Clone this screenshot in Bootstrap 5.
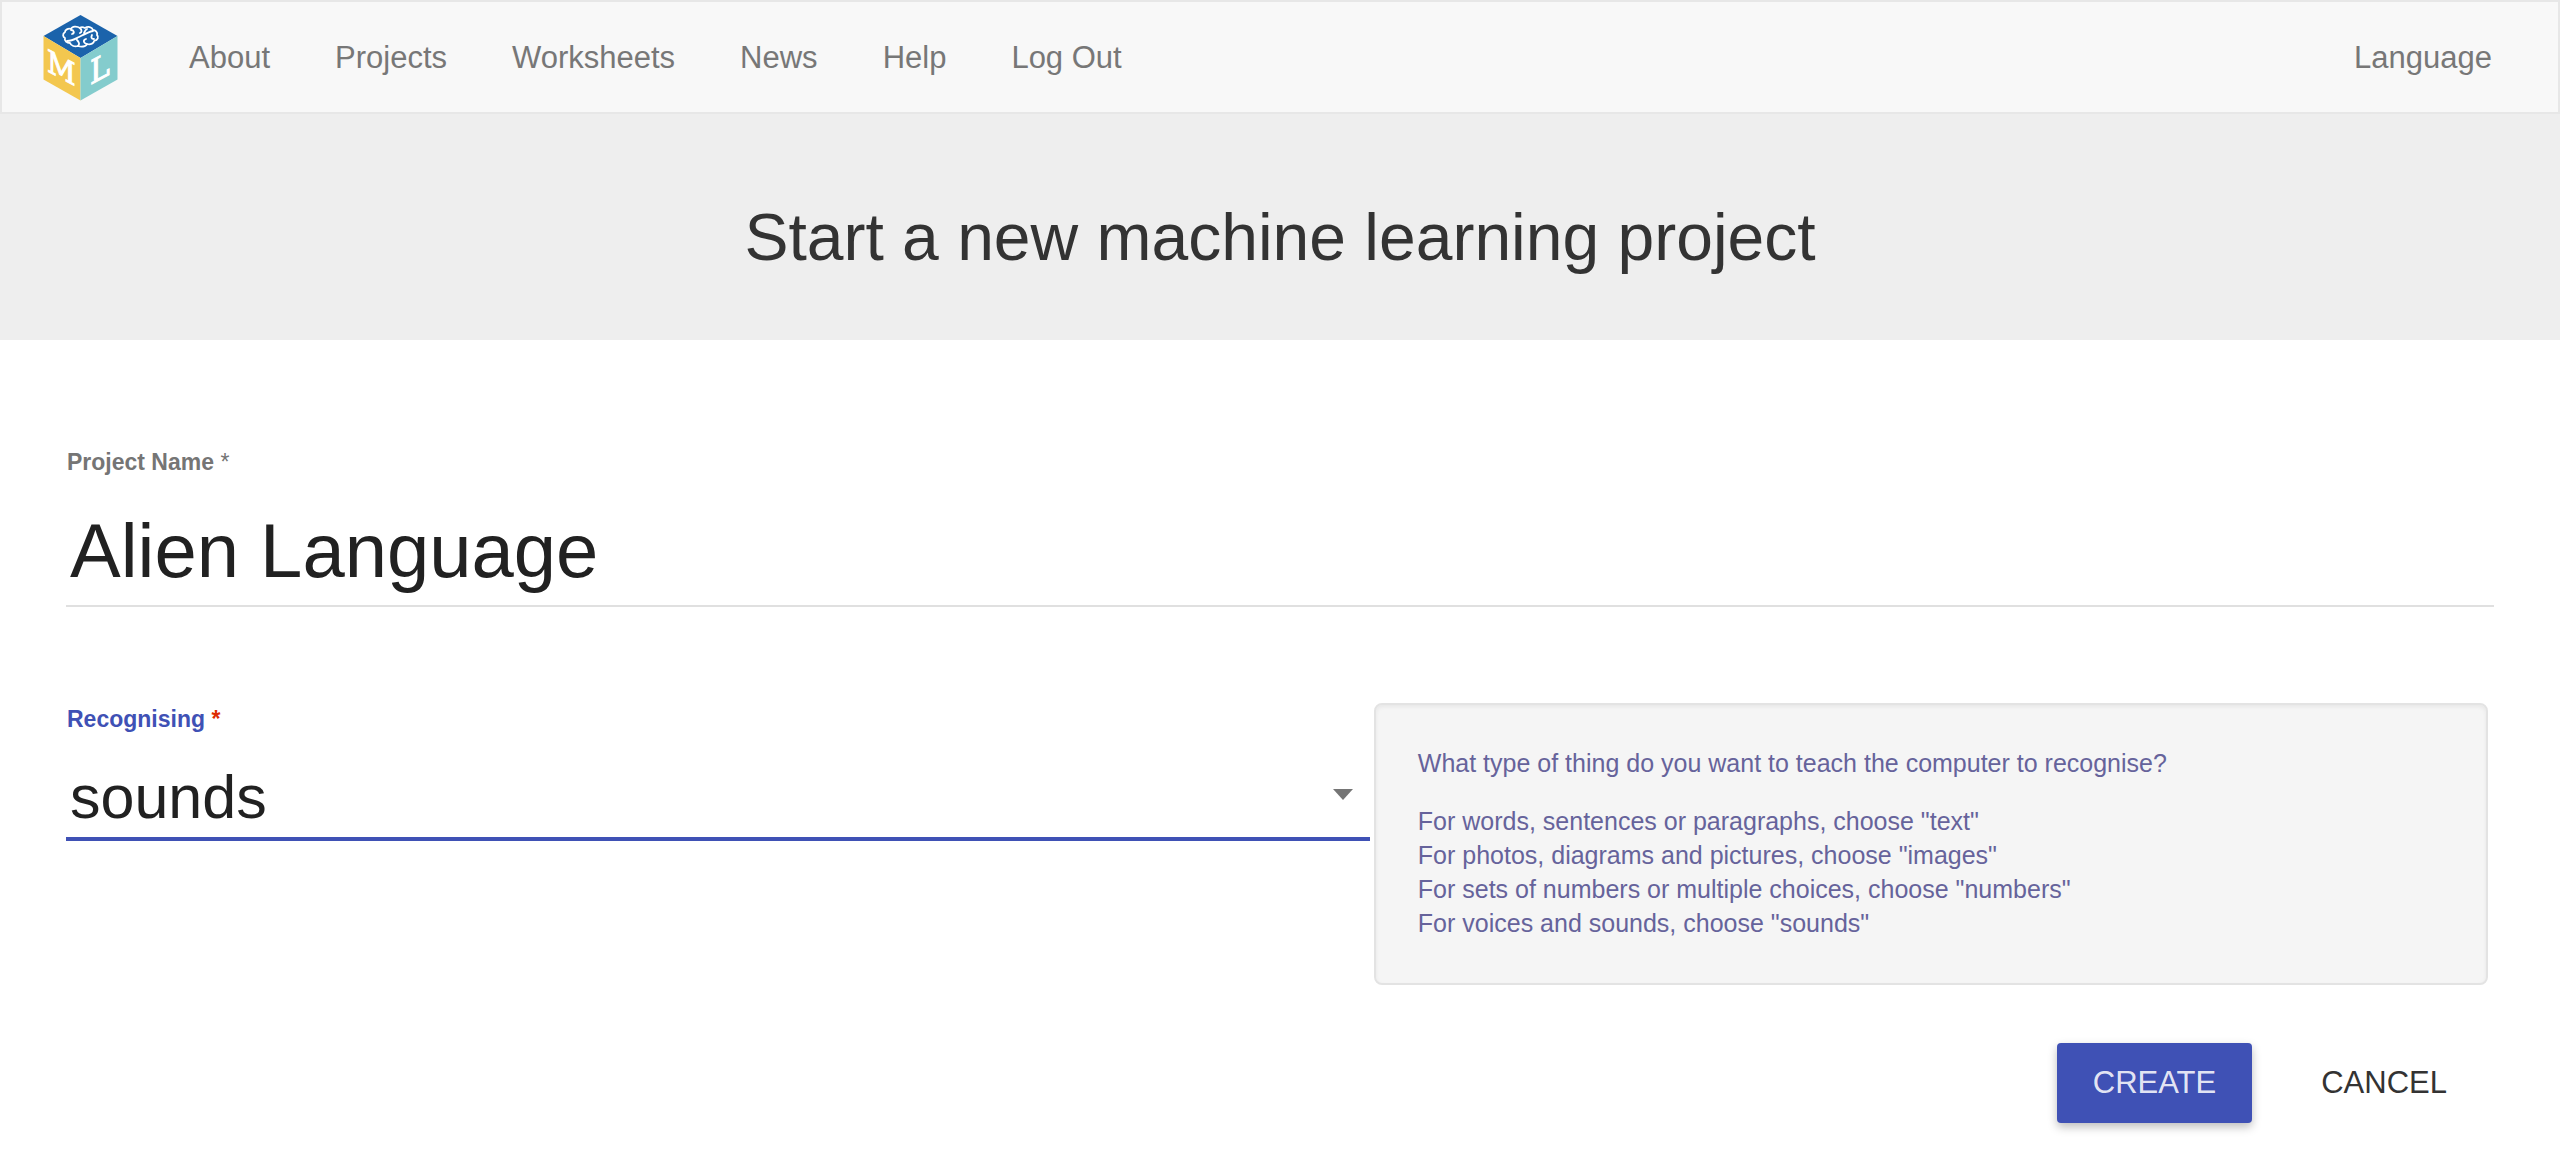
<!DOCTYPE html>
<html lang="en">
<head>
<meta charset="utf-8">
<meta name="viewport" content="width=device-width, initial-scale=1">
<title>Start a new machine learning project</title>
<link href="https://cdn.jsdelivr.net/npm/bootstrap@5.3.0/dist/css/bootstrap.min.css" rel="stylesheet">
<style>
  body { font-family: "Liberation Sans", Arial, sans-serif; color: #333; }
  .site-nav { background: #f8f8f8; border: 2px solid #e7e7e7; padding: 0 58px 0 41px; min-height: 114px; font-size: 31px; }
  .site-nav .nav-link { color: #777; padding-top: 2px; padding-bottom: 0; line-height: 40px; }
  .site-nav .navbar-brand { margin-right: 62px; padding: 0; }
  .site-nav .navbar-nav { gap: 49px; }
  .page-banner { background: #eee; padding: 90px 66px 70px; }
  .page-banner h1 { font-size: 66px; line-height: 66px; font-weight: 400; }
  .project-form { padding: 109px 66px 48px; }
  .field-label { font-size: 23px; line-height: 26px; font-weight: 700; color: #757575; padding-left: 1px; }
  .field-label span { font-weight: 400; }
  .field-box { display: block; width: 100%; border: 0; border-bottom: 2px solid #e0e0e0; background: transparent; color: #212121; outline: 0; padding: 0 4px; appearance: none; }
  .name-box { font-size: 76px; line-height: 88px; height: 132px; padding-top: 21px; }
  .type-row { margin-top: 96px; }
  .type-field { flex: 0 0 53.7%; padding-top: 3px; }
  .type-field .field-label { color: #3f51b5; }
  .type-field .field-label span { color: #dd2c00; font-weight: 700; }
  .type-box { font-size: 61px; line-height: 72px; height: 109px; border-bottom: 4px solid #3f51b5; padding-top: 24px; }
  .type-arrow { right: 17px; bottom: 41px; width: 20px; height: 11px; pointer-events: none; }
  .hint-card { margin: 0 6px 0 4px; padding: 41px 42px 43px; background: #f5f5f5; border: 2px solid #e3e3e3; border-radius: 8px; box-shadow: inset 0 2px 4px rgba(0,0,0,.06); color: #66639b; font-size: 25px; line-height: 34px; }
  .hint-card p { margin: 0 0 24px; }
  .form-actions { margin-top: 58px; gap: 33px; padding-right: 11px; }
  .form-actions .btn { font-size: 31px; line-height: 40px; padding: 20px 36px; border: 0; border-radius: 4px; }
  .form-actions .btn-create { background: #3f51b5; color: rgba(255,255,255,.87); box-shadow: 0 4px 10px rgba(0,0,0,.26); }
  .form-actions .btn-cancel { color: #333; }
</style>
</head>
<body>
<nav class="site-nav navbar navbar-expand">
  <a class="navbar-brand" href="#" aria-label="Home">
    <svg width="76" height="88" viewBox="0 0 76 88" class="d-block">
      <polygon points="37.500,2 74.500,23 37.500,45 0.500,23" fill="#1b63ab"/>
      <polygon points="0.500,23 37.500,45 37.500,87.500 0.500,66.500" fill="#f3c74f"/>
      <polygon points="74.500,23 37.500,45 37.500,87.500 74.500,66.500" fill="#84cccd"/>
      <g fill="none" stroke="#fff" stroke-width="1.800" stroke-linecap="round" stroke-linejoin="round">
        <path d="M37 15c-3-2-8-2-9 1c-3-1-6 1-6 3c-3 2-2 5 0 6c-1 3 2 5 5 5c1 3 5 4 8 3c3 1 8 1 9-2c4 1 7-1 7-3c4-1 5-4 3-6c1-3-2-5-4-5c-1-3-5-4-8-2c-2-1-4-1-5 0z"/>
        <path d="M24 28c5 0 8-2 12-4s9-5 14-6M37 15c2 2 2 4 0 5M28 17c3 0 4 3 1 4M44 16c-2 1-2 2-3 4M35 33c2-2 1-4-1-6M44 31c-4-1-4-4-1-5M51 26c-3 0-3-2-2-4"/>
      </g>
      <g fill="#fff" stroke="#fff" stroke-width="1" font-family="'DejaVu Serif Condensed', 'DejaVu Serif', serif">
        <text font-size="31" transform="translate(4 58) skewY(28)">M</text>
        <text font-size="33" transform="translate(47 72) skewY(-28)">L</text>
      </g>
    </svg>
  </a>
  <div class="navbar-nav">
    <a class="nav-link" href="#">About</a>
    <a class="nav-link" href="#">Projects</a>
    <a class="nav-link" href="#">Worksheets</a>
    <a class="nav-link" href="#">News</a>
    <a class="nav-link" href="#">Help</a>
    <a class="nav-link" href="#">Log Out</a>
  </div>
  <div class="navbar-nav ms-auto">
    <a class="nav-link" href="#">Language</a>
  </div>
</nav>
<header class="page-banner text-center">
  <h1 class="m-0">Start a new machine learning project</h1>
</header>
<main>
  <form class="project-form">
    <div>
      <label class="field-label d-block" for="projectName">Project Name <span>*</span></label>
      <input class="field-box name-box" id="projectName" type="text" value="Alien Language" required>
    </div>
    <div class="type-row d-flex align-items-start">
      <div class="type-field position-relative">
        <label class="field-label d-block" for="projectType">Recognising <span>*</span></label>
        <select class="field-box type-box" id="projectType" required>
          <option>text</option>
          <option>images</option>
          <option>numbers</option>
          <option selected>sounds</option>
        </select>
        <svg class="type-arrow position-absolute" viewBox="0 0 20 11"><path d="M0 0h20L10 11z" fill="#757575"/></svg>
      </div>
      <div class="hint-card flex-grow-1">
        <p>What type of thing do you want to teach the computer to recognise?</p>
        <div>For words, sentences or paragraphs, choose "text"</div>
        <div>For photos, diagrams and pictures, choose "images"</div>
        <div>For sets of numbers or multiple choices, choose "numbers"</div>
        <div>For voices and sounds, choose "sounds"</div>
      </div>
    </div>
    <div class="form-actions d-flex justify-content-end">
      <button class="btn btn-create" type="submit">CREATE</button>
      <button class="btn btn-cancel" type="button">CANCEL</button>
    </div>
  </form>
</main>
<script src="https://cdn.jsdelivr.net/npm/bootstrap@5.3.0/dist/js/bootstrap.bundle.min.js"></script>
</body>
</html>
